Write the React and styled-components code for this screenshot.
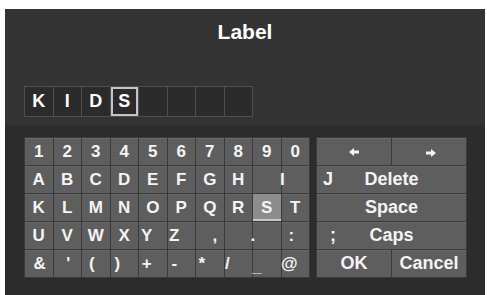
import React from "react";
import styled, { createGlobalStyle } from "styled-components";

const Global = createGlobalStyle`
  html, body {
    margin: 0;
    background: #ffffff;
    overflow: hidden;
  }
  body {
    font-family: "Liberation Sans", Arial, sans-serif;
  }
`;

const Panel = styled.div`
  margin: 9px 0 0 5px;
  width: 480px;
  height: 300px;
  background: #333333;
  display: flex;
  flex-direction: column;
`;

const Title = styled.div`
  padding-top: 12px;
  line-height: 22px;
  font-size: 21px;
  font-weight: bold;
  color: #ffffff;
  text-align: center;
`;

const InputRow = styled.div`
  margin: 43px 0 0 19px;
  align-self: flex-start;
  display: flex;
  gap: 1px;
  padding: 1px;
  background: #4f4f4f;
`;

const Cell = styled.div`
  width: 27.5px;
  height: 29px;
  background: #2b2b2b;
  box-shadow: ${(p) => (p.$active ? "inset 0 0 0 2px #c4c4c4" : "none")};
  display: flex;
  align-items: center;
  justify-content: center;
  font-size: 18px;
  font-weight: bold;
  color: #ffffff;
`;

const Keyboard = styled.div`
  margin-top: 8px;
  padding: 12px 18px 0 19px;
  flex: 1;
  background: #2c2c2c;
  display: flex;
  gap: 6px;
  align-items: flex-start;
`;

const Pad = styled.div`
  display: grid;
  grid-template-columns: repeat(${(p) => p.$cols}, ${(p) => p.$w}px);
  grid-auto-rows: 27px;
  gap: 1px;
  padding: 1px;
  background: #3a3a3a;
`;

const Key = styled.div`
  grid-column: span ${(p) => p.$span || 1};
  background: ${(p) => (p.$active ? "#8d8d8d" : "#5e5e5e")};
  box-shadow: ${(p) =>
    p.$active ? "inset 0 -2px 0 #cacaca" : "inset 0 1px 0 #686868"};
  display: flex;
  align-items: center;
  justify-content: center;
  font-size: ${(p) => (p.$word ? 18 : 17)}px;
  font-weight: bold;
  color: #f4f4f4;
`;

const WideKey = styled(Key)`
  display: grid;
  grid-template-columns: 1fr auto 1fr;
`;

const Side = styled.span`
  justify-self: start;
  padding-left: ${(p) => p.$pad}px;
`;

const Glyph = styled.span`
  display: inline-block;
  transform: translate(${(p) => p.$dx || 0}px, ${(p) => p.$dy || 0}px);
`;

const Arrow = ({ dir }) => (
  <svg width="10" height="8" viewBox="0 0 10 8">
    <g transform={dir === "right" ? "scale(-1,1) translate(-10,0)" : undefined}>
      <polygon points="0,4 5,0 5,2.5 10,2.5 10,5.5 5,5.5 5,8" fill="#f2f2f2" />
    </g>
  </svg>
);

const rows = [
  [["1"], ["2"], ["3"], ["4"], ["5"], ["6"], ["7"], ["8"], ["9"], ["0"]],
  [["A"], ["B"], ["C"], ["D"], ["E"], ["F"], ["G"], ["H"], [""], ["I", -13]],
  [["K"], ["L"], ["M"], ["N"], ["O"], ["P"], ["Q"], ["R"], ["S", 0, true], ["T"]],
  [["U"], ["V"], ["W"], ["X"], ["Y", -6], ["Z", -7], [",", 5], [""], [".", -14], [":", -4]],
  [["&", 1], ["'", 1], ["(", -4], [")", -7], ["+", -6], ["-", -7], ["*", -8], ["/", -11], ["_", -10, false, 3], ["@", -6]],
];

const name = ["K", "I", "D", "S", "", "", "", ""];

export default function App() {
  return (
    <>
      <Global />
      <Panel>
        <Title>Label</Title>
        <InputRow>
          {name.map((c, i) => (
            <Cell key={i} $active={i === 3}>
              {c}
            </Cell>
          ))}
        </InputRow>
        <Keyboard>
          <Pad $cols={10} $w={27.5}>
            {rows.flat().map(([c, dx, active, dy], i) => (
              <Key key={i} $active={active}>
                <Glyph $dx={dx} $dy={dy}>{c}</Glyph>
              </Key>
            ))}
          </Pad>
          <Pad $cols={2} $w={74}>
            <Key>
              <Arrow dir="left" />
            </Key>
            <Key>
              <Glyph $dx={2}>
                <Arrow dir="right" />
              </Glyph>
            </Key>
            <WideKey $span={2} $word>
              <Side $pad={6}>J</Side>
              <span>Delete</span>
              <span />
            </WideKey>
            <WideKey $span={2} $word>
              <span />
              <span>Space</span>
              <span />
            </WideKey>
            <WideKey $span={2} $word>
              <Side $pad={13}>;</Side>
              <span>Caps</span>
              <span />
            </WideKey>
            <Key $word>OK</Key>
            <Key $word>Cancel</Key>
          </Pad>
        </Keyboard>
      </Panel>
    </>
  );
}
